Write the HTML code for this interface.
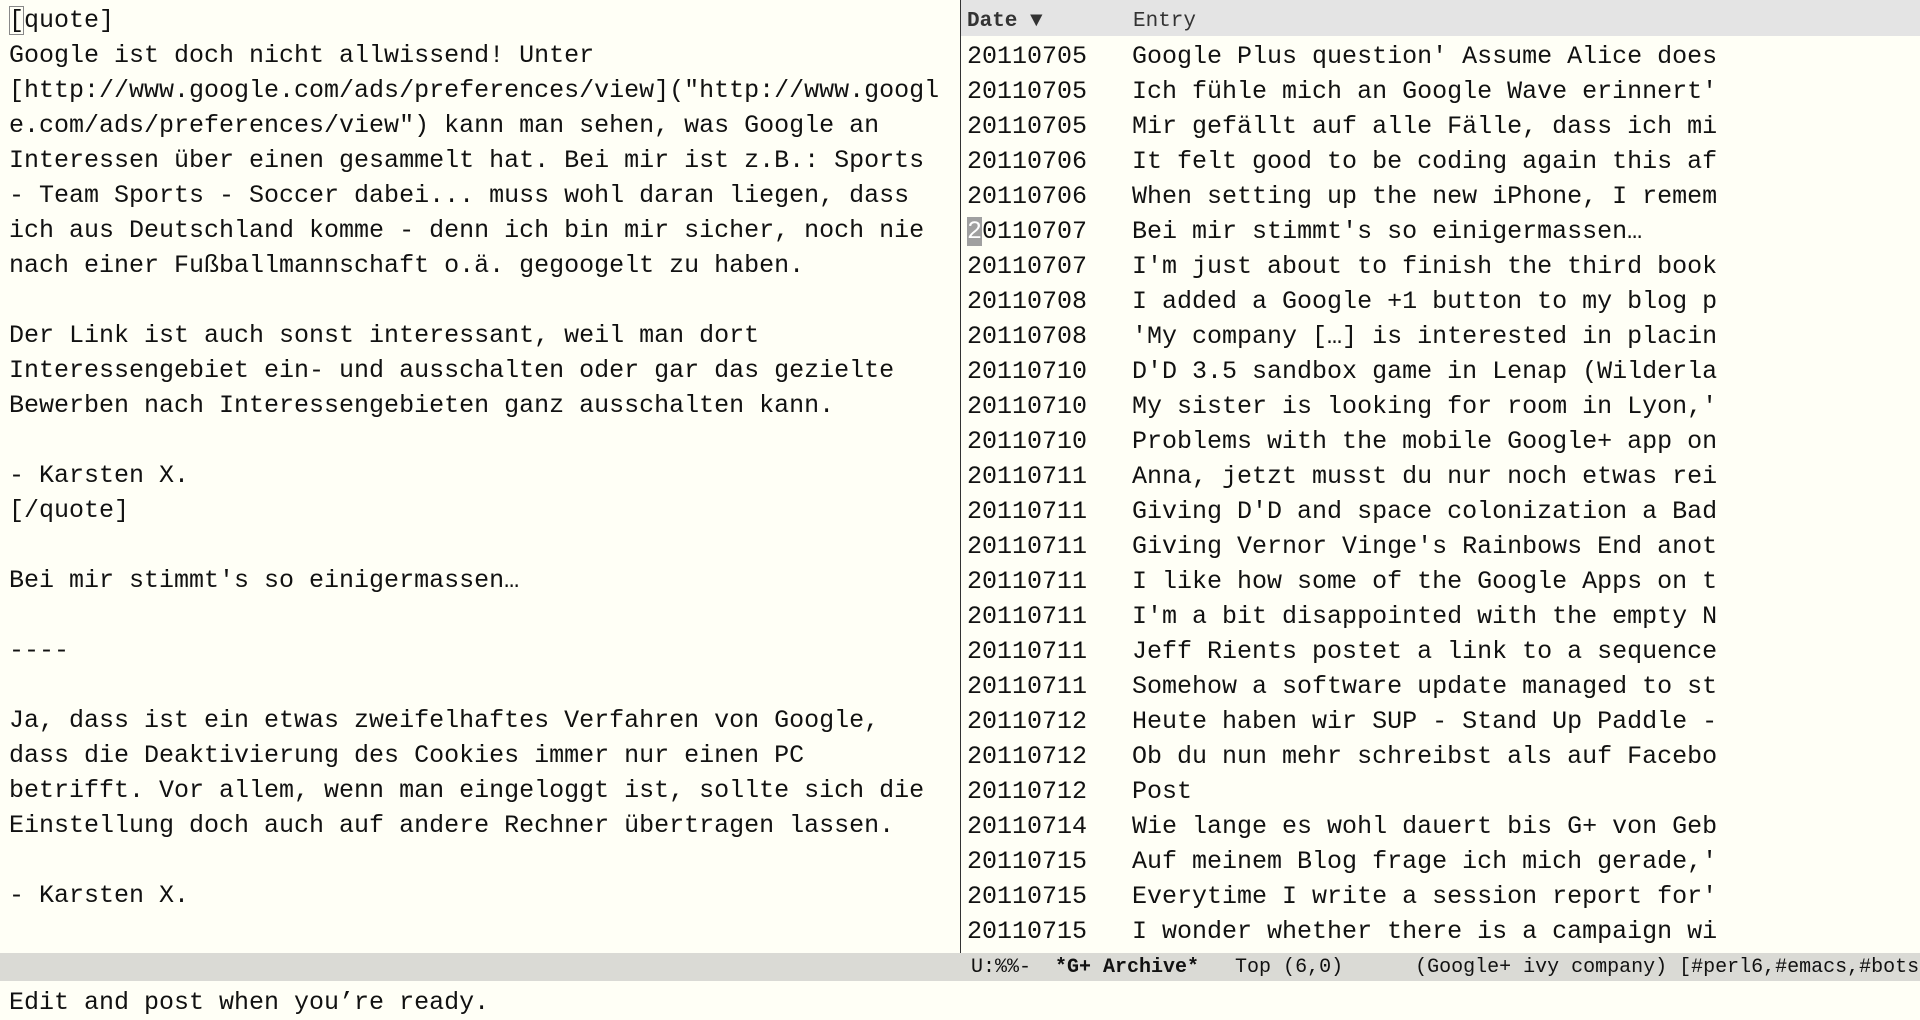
<!DOCTYPE html>
<html><head><meta charset="utf-8"><style>
*{margin:0;padding:0}
body{width:1920px;height:1016px;background:#fffff6;overflow:hidden;position:relative;font-family:"Liberation Mono",monospace;color:#111}
.l{position:absolute;white-space:pre;font-size:25px;line-height:35px;height:35px}
#left{position:absolute;left:0;top:0;width:960px;height:953px;overflow:hidden}
#left .l{margin-top:3px}
#right{position:absolute;left:961px;top:0;width:959px;height:953px;overflow:hidden}
#div{position:absolute;left:960px;top:0;width:1px;height:953px;background:#333}
#hdr{position:absolute;left:0;top:0;width:959px;height:36px;background:#e4e4e4}
#mode{position:absolute;left:0;top:953px;width:1920px;height:28px;background:#dadad5;overflow:hidden}
#mode span{position:absolute;left:971px;top:1px;font-size:20px;line-height:28px;white-space:pre;color:#111}
.cur{outline:1px solid #888;outline-offset:-1px}
.fc{background:#a0a0a0;color:#fff}
</style></head><body>
<div id="left">
<div class="l" style="left:9px;top:0"><span class="cur">[</span>quote]</div>
<div class="l" style="left:9px;top:35px">Google ist doch nicht allwissend! Unter</div>
<div class="l" style="left:9px;top:70px">[http://www.google.com/ads/preferences/view]("http://www.googl</div>
<div class="l" style="left:9px;top:105px">e.com/ads/preferences/view") kann man sehen, was Google an</div>
<div class="l" style="left:9px;top:140px">Interessen über einen gesammelt hat. Bei mir ist z.B.: Sports</div>
<div class="l" style="left:9px;top:175px">- Team Sports - Soccer dabei... muss wohl daran liegen, dass</div>
<div class="l" style="left:9px;top:210px">ich aus Deutschland komme - denn ich bin mir sicher, noch nie</div>
<div class="l" style="left:9px;top:245px">nach einer Fußballmannschaft o.ä. gegoogelt zu haben.</div>
<div class="l" style="left:9px;top:315px">Der Link ist auch sonst interessant, weil man dort</div>
<div class="l" style="left:9px;top:350px">Interessengebiet ein- und ausschalten oder gar das gezielte</div>
<div class="l" style="left:9px;top:385px">Bewerben nach Interessengebieten ganz ausschalten kann.</div>
<div class="l" style="left:9px;top:455px">- Karsten X.</div>
<div class="l" style="left:9px;top:490px">[/quote]</div>
<div class="l" style="left:9px;top:560px">Bei mir stimmt's so einigermassen…</div>
<div class="l" style="left:9px;top:630px">----</div>
<div class="l" style="left:9px;top:700px">Ja, dass ist ein etwas zweifelhaftes Verfahren von Google,</div>
<div class="l" style="left:9px;top:735px">dass die Deaktivierung des Cookies immer nur einen PC</div>
<div class="l" style="left:9px;top:770px">betrifft. Vor allem, wenn man eingeloggt ist, sollte sich die</div>
<div class="l" style="left:9px;top:805px">Einstellung doch auch auf andere Rechner übertragen lassen.</div>
<div class="l" style="left:9px;top:875px">- Karsten X.</div>
<div class="l" style="left:9px;top:945px">Ich hoffe, dass Google bald eine Lösung findet. Aber ich bin</div>
</div>
<div id="div"></div>
<div id="right">
<div id="hdr"></div>
<div class="l" style="left:6px;top:4px;font-size:21px;color:#333"><b>Date</b> ▼</div>
<div class="l" style="left:172px;top:4px;font-size:21px;color:#333">Entry</div>
<div class="l" style="left:6px;top:39px">20110705   Google Plus question' Assume Alice does
20110705   Ich fühle mich an Google Wave erinnert'
20110705   Mir gefällt auf alle Fälle, dass ich mi
20110706   It felt good to be coding again this af
20110706   When setting up the new iPhone, I remem
<span class="fc">2</span>0110707   Bei mir stimmt's so einigermassen…
20110707   I'm just about to finish the third book
20110708   I added a Google +1 button to my blog p
20110708   'My company […] is interested in placin
20110710   D'D 3.5 sandbox game in Lenap (Wilderla
20110710   My sister is looking for room in Lyon,'
20110710   Problems with the mobile Google+ app on
20110711   Anna, jetzt musst du nur noch etwas rei
20110711   Giving D'D and space colonization a Bad
20110711   Giving Vernor Vinge's Rainbows End anot
20110711   I like how some of the Google Apps on t
20110711   I'm a bit disappointed with the empty N
20110711   Jeff Rients postet a link to a sequence
20110711   Somehow a software update managed to st
20110712   Heute haben wir SUP - Stand Up Paddle -
20110712   Ob du nun mehr schreibst als auf Facebo
20110712   Post
20110714   Wie lange es wohl dauert bis G+ von Geb
20110715   Auf meinem Blog frage ich mich gerade,'
20110715   Everytime I write a session report for'
20110715   I wonder whether there is a campaign wi
20110715   Et Luctus Lhuit Iolahd Iglodal Ihlu Gol</div>
</div>
<div id="mode"><span>U:%%-  <b>*G+ Archive*</b>   Top (6,0)      (Google+ ivy company) [#perl6,#emacs,#bots</span></div>
<div class="l" style="left:9px;top:985px">Edit and post when you’re ready.</div>
</body></html>
